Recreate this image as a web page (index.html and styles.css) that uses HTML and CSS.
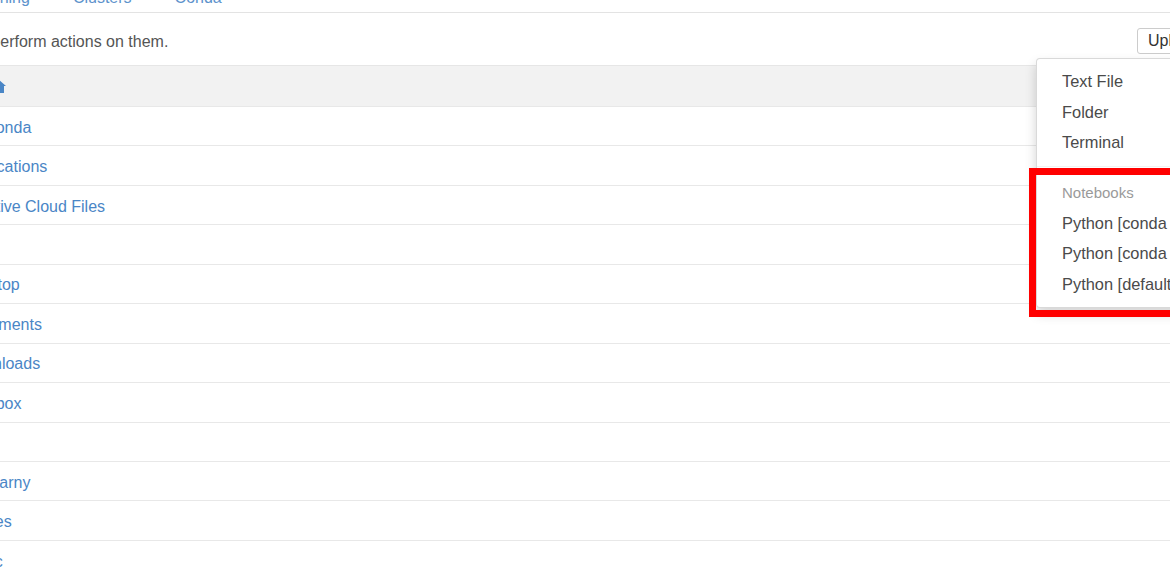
FILE: index.html
```html
<!DOCTYPE html>
<html lang="en">
  <head>
    <meta charset="UTF-8" />
    <title>Home</title>
    <link rel="stylesheet" href="styles.css">
  </head>
  <body>
    <div class="page">
      <ul class="tabs">
        <li><a href="#">Files</a></li>
        <li><a href="#">Running</a></li>
        <li><a href="#">Clusters</a></li>
        <li><a href="#">Conda</a></li>
      </ul>

      <div class="toolbar">
        <span class="hint">Select items to perform actions on them.</span>
        <div class="actions">
          <button class="btn btn-upload">Upload</button>
          <div class="new-wrap">
            <button class="btn btn-new">New <span class="caret"></span></button>
            <ul class="dropdown">
              <li><a href="#">Text File</a></li>
              <li><a href="#">Folder</a></li>
              <li><a href="#">Terminal</a></li>
              <li class="divider"></li>
              <li class="dropdown-header">Notebooks</li>
              <li><a href="#">Python [conda root]</a></li>
              <li><a href="#">Python [conda env:py27]</a></li>
              <li><a href="#">Python [default]</a></li>
              <li class="highlight"></li>
            </ul>
          </div>
          <button class="btn btn-refresh">&#8635;</button>
        </div>
      </div>

      <div class="list">
        <div class="list-header">
          <span class="select-all"><input type="checkbox" /> 0</span>
          <a href="#" class="home">
            <svg width="18" height="16" viewBox="0 0 18 16">
              <path d="M9 1 L1 8 L3 8 L3 15 L7 15 L7 10 L11 10 L11 15 L15 15 L15 8 L17 8 Z" fill="#4a86c6" />
            </svg>
          </a>
        </div>
        <div class="item"><input type="checkbox" /><span class="folder"></span><a href="#">anaconda</a></div>
        <div class="item"><input type="checkbox" /><span class="folder"></span><a href="#">Applications</a></div>
        <div class="item"><input type="checkbox" /><span class="folder"></span><a href="#">Creative Cloud Files</a></div>
        <div class="item"><input type="checkbox" /><span class="folder"></span><a href="#">Data</a></div>
        <div class="item"><input type="checkbox" /><span class="folder"></span><a href="#">Desktop</a></div>
        <div class="item"><input type="checkbox" /><span class="folder"></span><a href="#">Documents</a></div>
        <div class="item"><input type="checkbox" /><span class="folder"></span><a href="#">Downloads</a></div>
        <div class="item"><input type="checkbox" /><span class="folder"></span><a href="#">Dropbox</a></div>
        <div class="item"><input type="checkbox" /><span class="folder"></span><a href="#">Go</a></div>
        <div class="item"><input type="checkbox" /><span class="folder"></span><a href="#">Hubbarny</a></div>
        <div class="item"><input type="checkbox" /><span class="folder"></span><a href="#">Movies</a></div>
        <div class="item"><input type="checkbox" /><span class="folder"></span><a href="#">Music</a></div>
        <div class="item"><input type="checkbox" /><span class="folder"></span><a href="#">Pictures</a></div>
      </div>
    </div>
  </body>
</html>
```

FILE: styles.css
```css
html,
body {
  margin: 0;
  overflow: hidden;
  background: white;
}

body {
  font-family: "Liberation Sans", Arial, sans-serif;
  font-size: 16px;
  color: #555;
}

a {
  text-decoration: none;
}

.page {
  margin-left: -118px;
  width: 1458px;
}

/* tabs */
.tabs {
  list-style: none;
  display: flex;
  margin: -12px 0 0 0;
  padding: 0;
  border-bottom: 1px solid #e3e3e3;
}

.tabs li:first-child {
  margin-left: -10px;
}

.tabs a {
  display: block;
  line-height: 20px;
  padding: 0 21.5px 4px;
  color: #5e93cc;
}

/* toolbar */
.toolbar {
  display: flex;
  align-items: flex-start;
  justify-content: space-between;
  padding: 15px 0 12px;
  height: 25px;
}

.hint {
  line-height: 27px;
  color: #555;
}

.actions {
  display: flex;
  gap: 4px;
}

.btn {
  box-sizing: border-box;
  height: 26px;
  font-family: inherit;
  font-size: 16px;
  color: #333;
  background: white;
  border: 1px solid #ccc;
  border-radius: 3px;
  padding: 0 10px;
  text-align: left;
}

.btn-upload {
  width: 74px;
}

.btn-new {
  width: 81px;
}

.btn-refresh {
  width: 40px;
}

.caret {
  display: inline-block;
  border-top: 5px solid #333;
  border-left: 5px solid transparent;
  border-right: 5px solid transparent;
  vertical-align: middle;
}

.new-wrap {
  position: relative;
}

.dropdown {
  position: absolute;
  right: 0;
  top: calc(100% + 4px);
  width: 260px;
  box-sizing: border-box;
  list-style: none;
  margin: 0;
  padding: 7px 0 8px;
  background: white;
  border: 1px solid rgba(0, 0, 0, 0.15);
  border-radius: 4px;
  box-shadow: 0 6px 12px rgba(0, 0, 0, 0.175);
  z-index: 10;
}

.dropdown a {
  display: block;
  padding: 0 25px;
  line-height: 30.5px;
  font-size: 16.4px;
  color: #4a4a4a;
  white-space: nowrap;
}

.divider {
  height: 1px;
  margin: 8px 0 9px;
  background: #f2f2f2;
}

.dropdown-header {
  padding: 6px 25px 4px;
  line-height: 22px;
  font-size: 15px;
  color: #9a9a9a;
}

.highlight {
  position: absolute;
  left: -8px;
  top: 109px;
  width: 200px;
  height: 149px;
  box-sizing: border-box;
  border: 7px solid #ff0000;
  pointer-events: none;
}

/* file list */
.list-header {
  display: flex;
  align-items: center;
  height: 40px;
  padding-left: 10px;
  background: #f2f2f2;
  border-top: 1px solid #e6e6e6;
}

.select-all {
  width: 70px;
  margin-right: 27px;
}

.home svg {
  display: block;
}

.item {
  display: flex;
  align-items: center;
  height: 38.45px;
  padding-left: 10px;
  border-top: 1px solid #e8e8e8;
}

.item input {
  width: 15px;
  margin: 0 16px 0 0;
}

.folder {
  width: 18px;
  height: 14px;
  margin-right: 20px;
  background: #888;
}

.item a {
  padding-top: 3px;
  color: #4a86c6;
}
```
